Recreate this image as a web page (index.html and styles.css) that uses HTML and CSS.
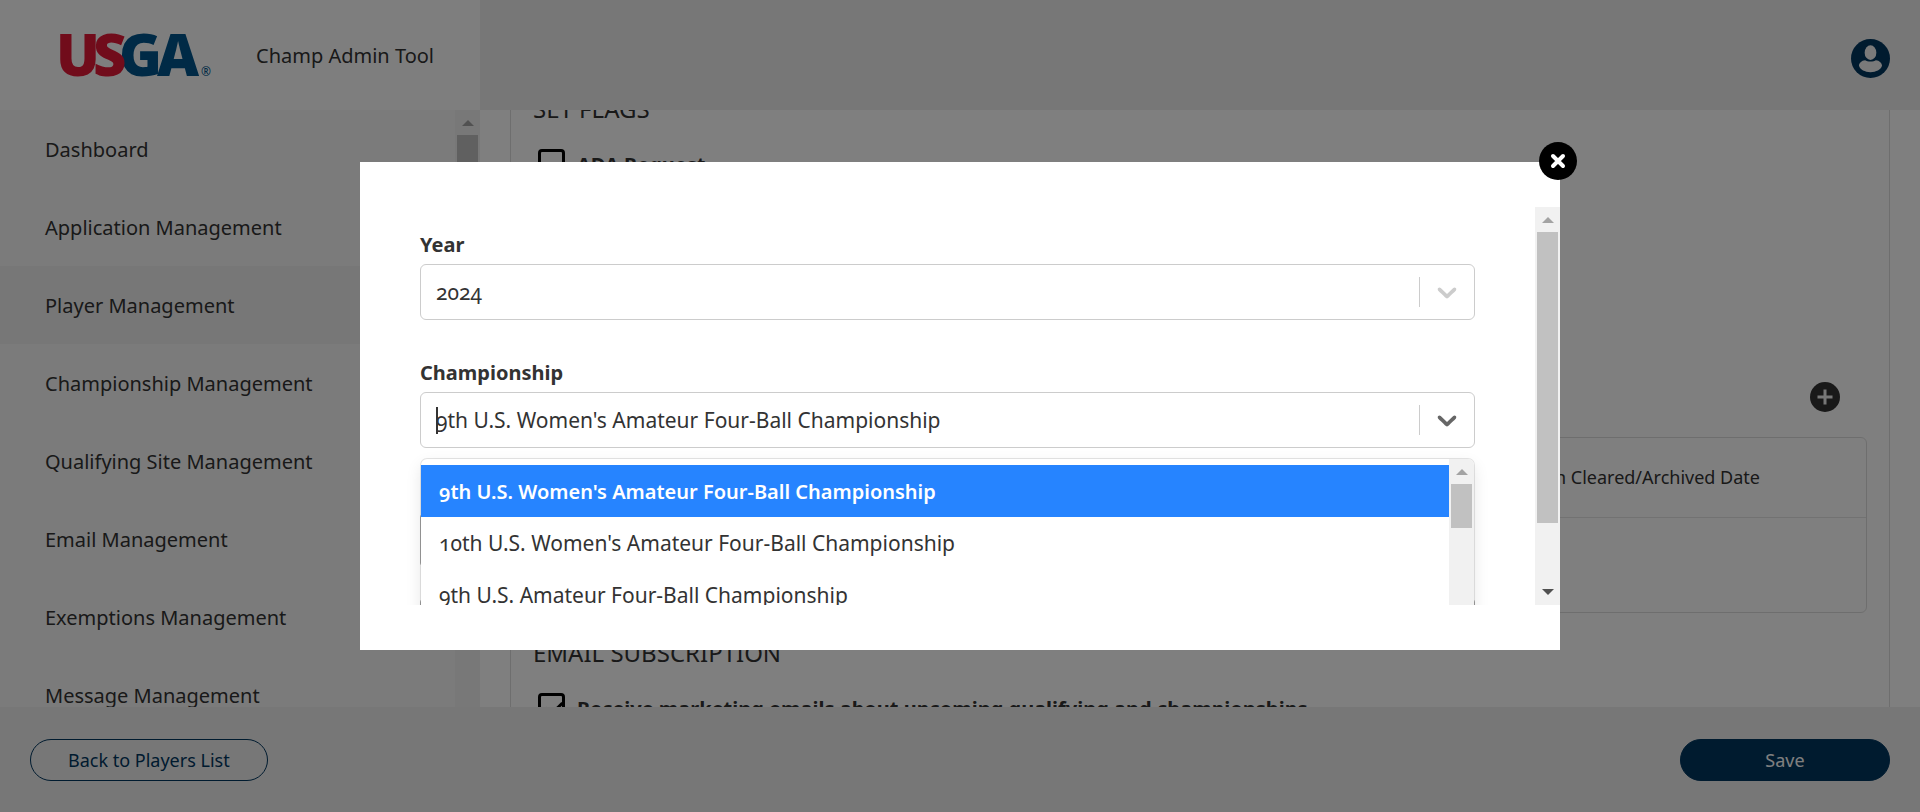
FILE: index.html
```html
<!DOCTYPE html>
<html lang="en">
<head>
<meta charset="utf-8">
<title>Champ Admin Tool</title>
<link rel="stylesheet" href="styles.css">
</head>
<body>
<div class="app">
  <header class="header">
    <div class="brand">
      <svg class="logo" viewBox="0 0 152 44" role="img" aria-label="USGA">
        <g class="logo-text">
          <text class="logo-red" x="-4" y="43">U</text>
          <text class="logo-blue" x="59" y="43">G</text>
          <text class="logo-blue" x="97" y="43">A</text>
          <text class="logo-red" x="33" y="43">S</text>
        </g>
        <text class="logo-mark" x="141" y="43">®</text>
      </svg>
      <span class="app-title">Champ Admin Tool</span>
    </div>
    <div class="header-tools">
      <button class="user-button" type="button" aria-label="Account">
        <svg viewBox="0 0 40 40">
          <circle class="user-disc" cx="20" cy="20" r="20"/>
          <ellipse class="user-shape" cx="20" cy="14" rx="6" ry="7.5"/>
          <path class="user-shape" d="M14.500 21.800C16.500 23.500 23.500 23.500 25.500 21.800C29 22 32 25 31.800 27.500C30.500 31.500 26 34 20 34S9.500 31.500 8.200 27.500C8 25 11 22 14.500 21.800Z"/>
        </svg>
      </button>
    </div>
  </header>

  <div class="body">
    <div class="sidebar">
      <nav class="nav">
        <a href="#">Dashboard</a>
        <a href="#">Application Management</a>
        <a href="#" class="active">Player Management</a>
        <a href="#">Championship Management</a>
        <a href="#">Qualifying Site Management</a>
        <a href="#">Email Management</a>
        <a href="#">Exemptions Management</a>
        <a href="#">Message Management</a>
      </nav>
      <div class="scrollbar"><i class="arrow-up"></i><i class="thumb thumb-nav"></i></div>
    </div>
    <main class="main">
      <div class="card">
        <h2 class="section-title">Set Flags</h2>
        <label class="check"><input type="checkbox"><span>ADA Request</span></label>
        <div class="list-tools">
          <button class="add" type="button" aria-label="Add">
            <svg viewBox="0 0 30 30"><circle cx="15" cy="15" r="15"/><path d="M15 7.500v15M7.500 15h15"/></svg>
          </button>
        </div>
        <div class="table-wrap">
          <table class="table">
            <thead><tr><th>Suspension Cleared/Archived Date</th></tr></thead>
            <tbody><tr><td></td></tr></tbody>
          </table>
        </div>
        <h2 class="section-title">Email Subscription</h2>
        <label class="check"><input type="checkbox" checked><span>Receive marketing emails about upcoming qualifying and championships</span></label>
      </div>
    </main>
  </div>

  <footer class="footer">
    <button class="pill outline" type="button">Back to Players List</button>
    <button class="pill solid" type="button">Save</button>
  </footer>
</div>

<div class="overlay">
  <div class="modal" role="dialog" aria-modal="true">
    <button class="close" type="button" aria-label="Close">
      <svg viewBox="0 0 38 38"><path d="M14 14l10 10M24 14l-10 10"/></svg>
    </button>
    <div class="modal-scroll">
      <form class="form">
        <div class="field">
          <label for="year">Year</label>
          <div class="control muted">
            <select id="year"><option>2024</option></select>
            <span class="indicator"><svg viewBox="0 0 20 20"><path d="M4.516 7.548c0.436-0.446 1.043-0.481 1.576 0l3.908 3.747 3.908-3.747c0.533-0.481 1.141-0.446 1.574 0 0.436 0.445 0.408 1.197 0 1.615-0.406 0.418-4.695 4.502-4.695 4.502-0.217 0.223-0.502 0.335-0.787 0.335s-0.570-0.112-0.789-0.335c0 0-4.287-4.084-4.695-4.502s-0.436-1.170 0-1.615z"/></svg></span>
          </div>
        </div>
        <div class="field">
          <label for="championship">Championship</label>
          <div class="control">
            <input id="championship" type="text" role="combobox" aria-expanded="true" aria-controls="championship-list" value="9th U.S. Women's Amateur Four-Ball Championship">
            <i class="caret"></i>
            <span class="indicator"><svg viewBox="0 0 20 20"><path d="M4.516 7.548c0.436-0.446 1.043-0.481 1.576 0l3.908 3.747 3.908-3.747c0.533-0.481 1.141-0.446 1.574 0 0.436 0.445 0.408 1.197 0 1.615-0.406 0.418-4.695 4.502-4.695 4.502-0.217 0.223-0.502 0.335-0.787 0.335s-0.570-0.112-0.789-0.335c0 0-4.287-4.084-4.695-4.502s-0.436-1.170 0-1.615z"/></svg></span>
          </div>
          <div class="menu">
            <ul class="options" id="championship-list" role="listbox">
              <li role="option" aria-selected="true">9th U.S. Women's Amateur Four-Ball Championship</li>
              <li role="option">10th U.S. Women's Amateur Four-Ball Championship</li>
              <li role="option">9th U.S. Amateur Four-Ball Championship</li>
            </ul>
            <div class="scrollbar"><i class="arrow-up"></i><i class="thumb thumb-menu"></i></div>
          </div>
        </div>
        <div class="extra">
          <div class="box half"></div>
          <div class="box"></div>
        </div>
      </form>
      <div class="scrollbar"><i class="arrow-up"></i><i class="thumb thumb-modal"></i><i class="arrow-down"></i></div>
    </div>
  </div>
</div>
</body>
</html>
```
FILE: styles.css
```css
* { box-sizing: border-box; }

body {
  margin: 0;
  color: #333;
  font: 400 20px/30px "Noto Sans", "Open Sans", sans-serif;
  font-variant-numeric: oldstyle-nums;
}

button, input, select { font: inherit; font-variant-numeric: inherit; color: inherit; }
button { cursor: pointer; }
svg { display: block; }

.app {
  display: grid;
  grid-template-rows: auto minmax(0, 1fr) auto;
  height: 100vh;
  overflow: hidden;
  background: #fff;
}

/* Header */
.header { display: flex; height: 110px; background: #eee; }
.brand {
  display: flex;
  align-items: center;
  gap: 44px;
  width: 480px;
  padding-left: 60px;
  background: #fdfdfd;
}
.logo { width: 152px; height: 44px; overflow: visible; }
.logo-text { font-size: 58px; font-weight: 900; }
.logo-red { fill: #e31837; }
.logo-blue { fill: #00558c; }
.logo-mark { font-size: 12px; font-weight: 500; fill: #00558c; }
.app-title { padding-top: 2px; }
.header-tools {
  display: flex;
  flex: 1;
  align-items: center;
  justify-content: flex-end;
  padding: 7px 30px 0 0;
}
.user-button { width: 39px; height: 39px; padding: 0; border: 0; background: none; }
.user-disc { fill: #00365f; }
.user-shape { fill: #f4f4f4; }

/* Sidebar */
.body { display: flex; min-height: 0; }
.sidebar { display: flex; width: 480px; overflow: hidden; background: #f7f7f7; }
.nav { flex: 1; }
.nav a {
  display: flex;
  align-items: center;
  height: 78px;
  padding: 2px 0 0 45px;
  color: inherit;
  text-decoration: none;
}
.nav .active { background: #eee; }

/* Scrollbars */
.scrollbar {
  display: flex;
  flex: none;
  flex-direction: column;
  align-items: center;
  width: 25px;
  background: #f1f1f1;
}
.arrow-up, .arrow-down {
  flex: none;
  border: 6px solid transparent;
  border-top: 0;
  border-bottom-color: #a3a3a3;
  margin: 10px 0 9px;
}
.arrow-down { margin: auto 0 10px; border-top: 6px solid #505050; border-bottom: 0; }
.thumb { flex: none; width: 21px; background: #c1c1c1; }
.thumb-nav { height: 200px; }
.thumb-menu { height: 44px; }
.thumb-modal { height: 73%; }

/* Content */
.main { flex: 1; min-width: 0; overflow: hidden; padding: 0 30px; }
.card {
  margin-top: -17px;
  padding: 0 22px;
  border: solid #ddd;
  border-width: 0 1px;
}
.section-title {
  margin: 0;
  font-size: 24px;
  font-weight: 400;
  line-height: 32px;
  text-transform: uppercase;
}
.check {
  display: flex;
  align-items: center;
  gap: 12px;
  height: 32px;
  margin: 21px 0 0 5px;
  font-weight: 700;
}
.check span { padding-top: 6px; }
.check input {
  position: relative;
  width: 27px;
  height: 27px;
  margin: 0;
  border: 3px solid #000;
  border-radius: 4px;
  appearance: none;
}
.check input:checked::after {
  content: "";
  position: absolute;
  left: 8px;
  top: 2px;
  width: 7px;
  height: 14px;
  border: solid #000;
  border-width: 0 3px 3px 0;
  transform: rotate(45deg);
}
.list-tools { display: flex; justify-content: flex-end; margin-top: 204px; padding-right: 27px; }
.add { width: 30px; height: 30px; padding: 0; border: 0; background: none; }
.add circle { fill: #333; }
.add path { stroke: #eee; stroke-width: 3; }
.table-wrap { margin: 25px 0 24px; border: 1px solid #ddd; border-radius: 6px; }
.table { width: 100%; border-collapse: collapse; font-size: 18px; }
.table th {
  height: 79px;
  padding: 0 106px 0 0;
  border-bottom: 1px solid #e4e4e4;
  font-weight: 400;
  text-align: right;
}
.table td { height: 95px; padding: 0; }

/* Footer */
.footer {
  position: relative;
  display: flex;
  align-items: center;
  justify-content: space-between;
  height: 105px;
  padding: 0 30px;
  background: #eee;
}
.pill { height: 42px; border: 1px solid #00365f; border-radius: 21px; font-size: 18px; line-height: 24px; }
.outline { padding: 0 37px; background: none; color: #00365f; }
.solid { width: 210px; background: #00365f; color: #fff; }

/* Modal */
.overlay {
  position: fixed;
  inset: 0;
  display: flex;
  align-items: center;
  justify-content: center;
  background: rgba(0, 0, 0, .5);
}
.modal { position: relative; width: 62.5%; padding: 45px 0; background: #fff; }
.close {
  position: absolute;
  top: -20px;
  right: -17px;
  width: 38px;
  height: 38px;
  padding: 0;
  border: 0;
  border-radius: 50%;
  background: #000;
}
.close path { stroke: #fff; stroke-width: 4; stroke-linecap: round; }
.modal-scroll { display: flex; height: 49vh; overflow: hidden; }
.form { flex: 1; min-width: 0; padding: 23px 60px 0; }
.field { position: relative; margin-bottom: 38px; }
.field label { display: block; margin-bottom: 4px; font-weight: 700; }
.control {
  position: relative;
  display: flex;
  align-items: center;
  height: 56px;
  border: 1px solid #ccc;
  border-radius: 6px;
  font-size: 21px;
  color: #666;
}
.control select, .control input {
  flex: 1;
  min-width: 0;
  height: 100%;
  padding: 0 0 0 15px;
  border: 0;
  outline: 0;
  background: none;
  color: #333;
  appearance: none;
}
.muted { color: #ccc; }
.indicator {
  display: flex;
  align-items: center;
  justify-content: center;
  width: 55px;
  height: 30px;
  border-left: 1px solid #ccc;
  pointer-events: none;
}
.indicator svg { width: 32px; height: 32px; fill: currentColor; }
.caret { position: absolute; left: 15px; top: 14px; width: 2px; height: 27px; background: #333; }
.menu {
  position: absolute;
  top: calc(100% + 11px);
  left: 1px;
  right: 1px;
  display: flex;
  height: 300px;
  overflow: hidden;
  border-radius: 6px;
  background: #fff;
  box-shadow: 0 0 0 1px rgba(0, 0, 0, .1), 0 6px 16px rgba(0, 0, 0, .1);
}
.options { flex: 1; margin: 0; padding: 6px 0 0; font-size: 21px; list-style: none; }
.options li { height: 52px; padding: 11px 18px; }
.options [aria-selected="true"] { padding-top: 12px; background: #2684ff; color: #fff; font-size: 20px; font-weight: 600; }
.extra { padding-top: 28px; }
.box { height: 52px; margin-bottom: 33px; border: 1px solid #aaa; border-radius: 3px; }
.half { width: 50%; }
```
